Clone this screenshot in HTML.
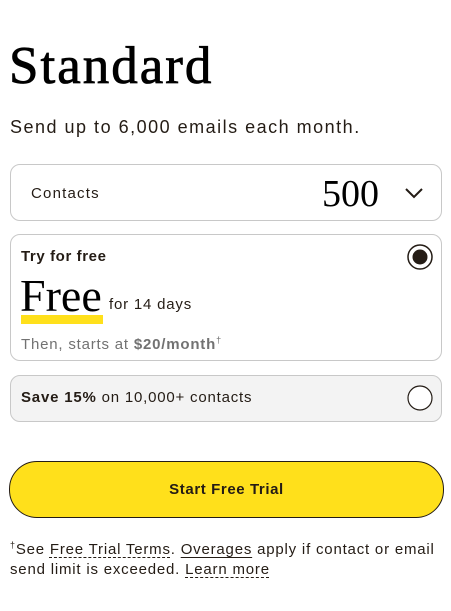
<!DOCTYPE html>
<html><head><meta charset="utf-8"><style>
body{margin:0;width:451px;height:611px;background:#fff;position:relative;font-family:"Liberation Sans",sans-serif;color:#241c15;overflow:hidden}
.a{position:absolute;white-space:nowrap}
.box{position:absolute;left:10px;width:430px;border:1px solid #c8c8c8;border-radius:10px;box-sizing:content-box}
.dash{text-decoration:underline dashed;text-underline-offset:3px;text-decoration-thickness:1px}
</style></head><body>
<div class="a" style="left:9px;top:36px;font-family:'Liberation Serif',serif;font-size:53px;line-height:60px;color:#000;-webkit-text-stroke:0.8px #000;letter-spacing:2px">Standard</div>
<div class="a" style="left:10px;top:116px;font-size:18px;line-height:22px;letter-spacing:1.5px">Send up to 6,000 emails each month.</div>

<div class="box" style="top:164px;height:55px"></div>
<div class="a" style="left:31px;top:185px;font-size:15px;line-height:18px;letter-spacing:1.2px">Contacts</div>
<div class="a" style="left:322px;top:173px;font-family:'Liberation Serif',serif;font-size:38px;line-height:42px;color:#000">500</div>
<svg class="a" style="left:403px;top:186px" width="22" height="14"><path d="M3 3 L11 11 L19 3" fill="none" stroke="#241c15" stroke-width="2"/></svg>

<div class="box" style="top:234px;height:125px"></div>
<div class="a" style="left:21px;top:248px;font-size:15px;line-height:18px;font-weight:bold;letter-spacing:0.6px">Try for free</div>
<svg class="a" style="left:406px;top:243px" width="28" height="28"><circle cx="14" cy="14" r="12" fill="#fff" stroke="#241c15" stroke-width="1.5"/><circle cx="14" cy="14" r="7.5" fill="#241c15"/></svg>
<div class="a" style="left:21px;top:315px;width:82px;height:9px;background:#ffe01b"></div>
<div class="a" style="left:20px;top:273px;font-family:'Liberation Serif',serif;font-size:46px;line-height:46px;color:#000">Free</div>
<div class="a" style="left:109px;top:296px;font-size:15px;line-height:18px;letter-spacing:0.8px">for 14 days</div>
<div class="a" style="left:21px;top:331px;font-size:15px;line-height:18px;color:#727272;letter-spacing:0.8px">Then, starts at <b>$20/month</b><sup style="font-size:9px">†</sup></div>

<div class="box" style="top:375px;height:45px;background:#f3f3f3"></div>
<div class="a" style="left:21px;top:389px;font-size:15px;line-height:18px;letter-spacing:0.8px"><b>Save 15%</b> on 10,000+ contacts</div>
<svg class="a" style="left:406px;top:384px" width="28" height="28"><circle cx="14" cy="14" r="12" fill="#fff" stroke="#241c15" stroke-width="1.2"/></svg>

<div class="a" style="left:9px;top:461px;width:433px;height:55px;background:#ffe01b;border:1px solid #241c15;border-radius:28px;text-align:center;line-height:55px;font-size:15px;font-weight:bold;letter-spacing:0.6px">Start Free Trial</div>

<div class="a" style="left:10px;top:535px;font-size:15px;line-height:20px;color:#241c15;white-space:normal;width:436px;letter-spacing:0.8px"><sup style="font-size:9px">†</sup>See <span class="dash">Free Trial Terms</span>. <u style="text-underline-offset:3px">Overages</u> apply if contact or email send limit is exceeded. <span class="dash">Learn more</span></div>
</body></html>
